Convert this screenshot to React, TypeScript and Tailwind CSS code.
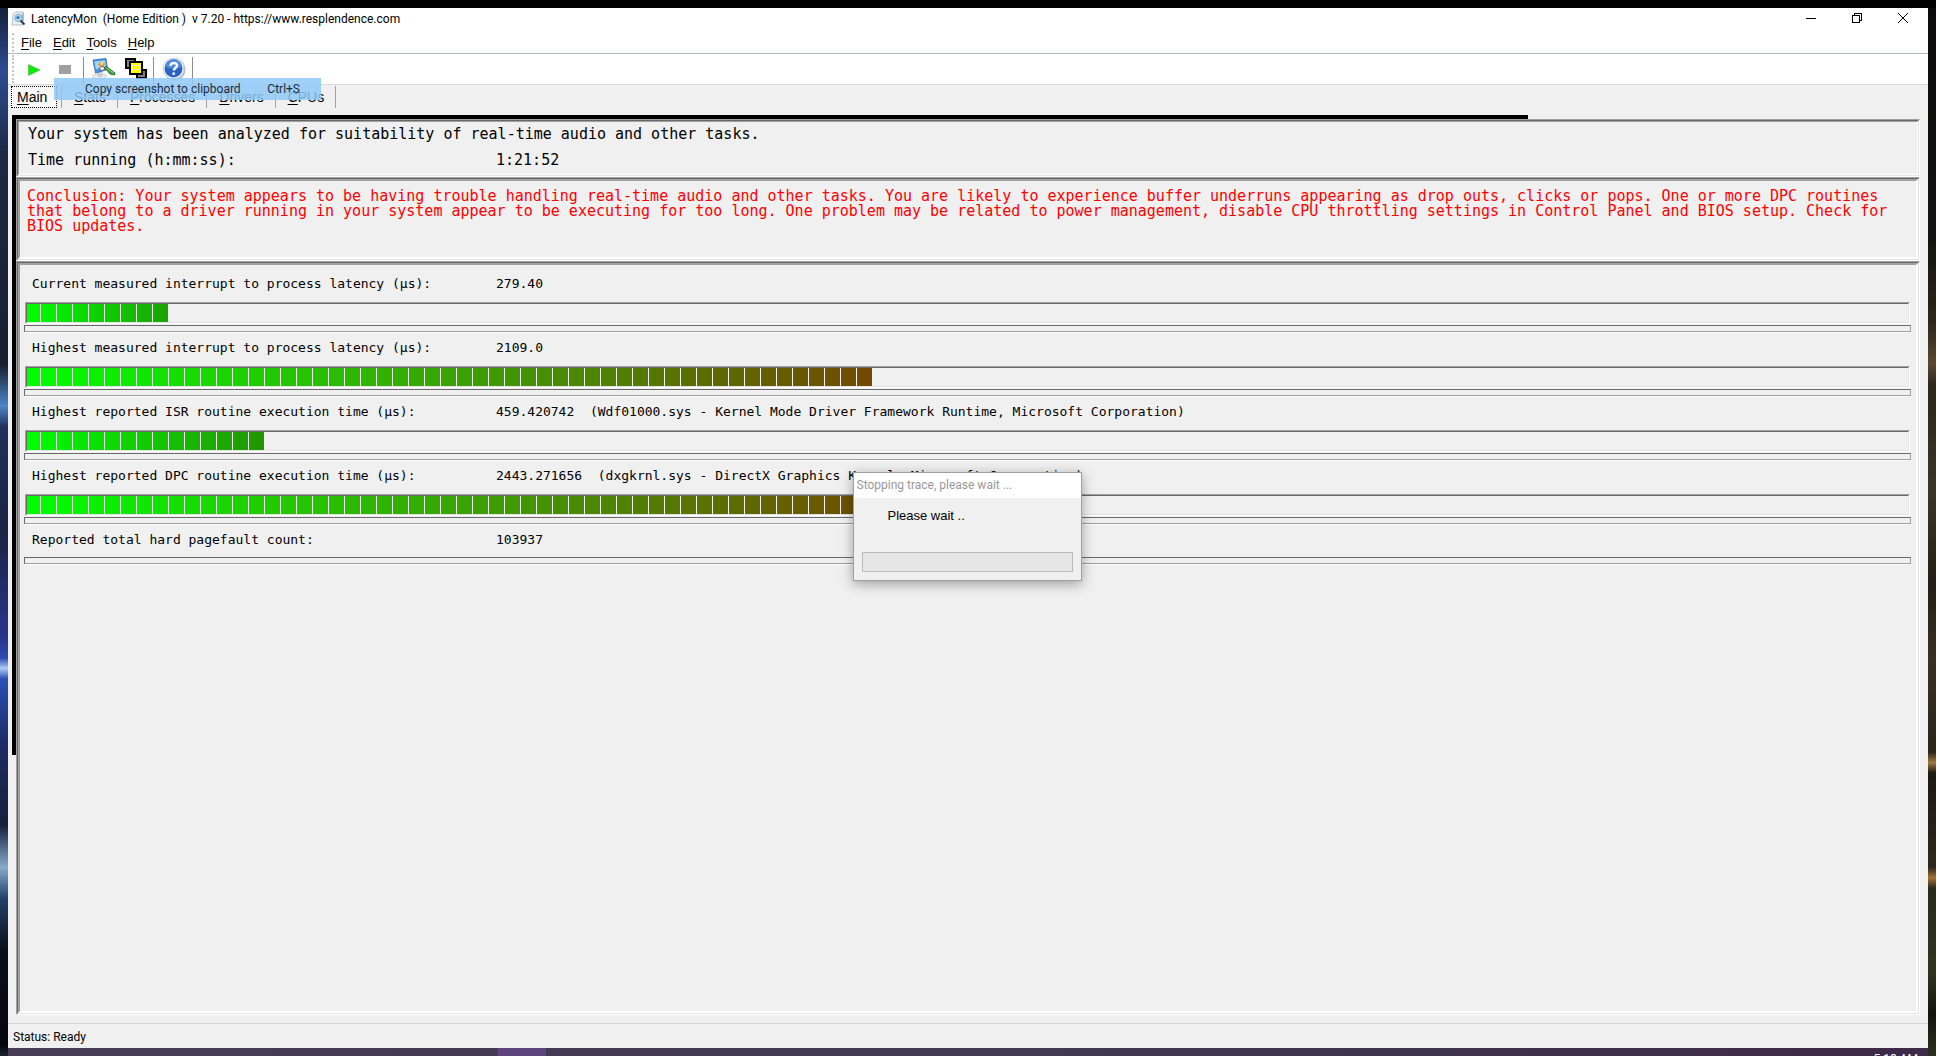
import React from "react";

type Reading = {
  label: string;
  value: string;
  source?: string;
  segments?: number;
  endColor?: string;
};

const readings: Reading[] = [
  { label: "Current measured interrupt to process latency (µs):", value: "279.40", segments: 9, endColor: "#1aa400" },
  { label: "Highest measured interrupt to process latency (µs):", value: "2109.0", segments: 53, endColor: "#724800" },
  {
    label: "Highest reported ISR routine execution time (µs):",
    value: "459.420742",
    source: "(Wdf01000.sys - Kernel Mode Driver Framework Runtime, Microsoft Corporation)",
    segments: 15,
    endColor: "#229600",
  },
  {
    label: "Highest reported DPC routine execution time (µs):",
    value: "2443.271656",
    source: "(dxgkrnl.sys - DirectX Graphics Kernel, Microsoft Corporation)",
    segments: 56,
    endColor: "#764400",
  },
  { label: "Reported total hard pagefault count:", value: "103937" },
];

const menus = ["File", "Edit", "Tools", "Help"];
const tabs = ["Stats", "Processes", "Drivers", "CPUs"];

function Mnemonic({ text }: { text: string }) {
  return (
    <>
      <span className="underline underline-offset-2">{text[0]}</span>
      {text.slice(1)}
    </>
  );
}

function Panel({ thin, className, children }: { thin?: boolean; className?: string; children: React.ReactNode }) {
  return (
    <section className={`flex border border-t-[#a0a0a0] border-l-[#a0a0a0] border-r-white border-b-white ${className ?? ""}`}>
      <div className="flex flex-1 border border-t-[#696969] border-l-[#696969] border-r-[#e3e3e3] border-b-[#e3e3e3]">
        <div
          className={`min-w-0 flex-1 border-t-[#a0a0a0] border-l-[#a0a0a0] border-r-white border-b-white ${thin ? "border" : "border-2"}`}
        >
          {children}
        </div>
      </div>
    </section>
  );
}

function Meter({ segments, endColor }: { segments: number; endColor: string }) {
  return (
    <div className="mr-[6px] ml-[5px] border border-t-[#a0a0a0] border-l-[#a0a0a0] border-r-white border-b-white">
      <div className="flex h-5 border border-t-[#696969] border-l-[#696969] border-r-[#e3e3e3] border-b-[#e3e3e3]">
        <div className="flex h-full" style={{ background: `linear-gradient(to right, #00ff00, ${endColor})` }}>
          {Array.from({ length: segments }, (_, i) => (
            <span
              key={i}
              className={`h-full ${i === 0 ? "w-[13px]" : "w-4 border-l border-[#f0f0f0]"}`}
            />
          ))}
        </div>
      </div>
    </div>
  );
}

function Groove() {
  return (
    <div className="mr-[5px] ml-1 h-2 border-b border-white">
      <div className="h-[7px] border border-t-[#696969] border-l-[#696969] border-r-[#a0a0a0] border-b-[#a0a0a0]" />
    </div>
  );
}

function ReadingRow({ reading }: { reading: Reading }) {
  return (
    <div>
      <div className="flex pl-3 text-[13px] leading-[30px] whitespace-pre">
        <span className="w-[464px] shrink-0">{reading.label}</span>
        <span>{reading.value}{reading.source ? `  ${reading.source}` : ""}</span>
      </div>
      {reading.segments && reading.endColor ? (
        <div className="mt-[3px] mb-px">
          <Meter segments={reading.segments} endColor={reading.endColor} />
        </div>
      ) : (
        <div className="h-[2px]" />
      )}
      <Groove />
    </div>
  );
}

function AppIcon() {
  return (
    <svg width="16" height="16" viewBox="0 0 16 16" aria-hidden="true">
      <path d="M2 3l3-2h7v13H1z" fill="#e9f0f5" stroke="#9fb4c2" strokeWidth=".8" />
      <path d="M12 2v8" stroke="#7f98a8" />
      <circle cx="7.500" cy="7" r="3.800" fill="#a9d3f0" stroke="#7da3bd" strokeWidth=".8" />
      <circle cx="7" cy="6.500" r="1.600" fill="#3d78ac" />
      <path d="M9.500 9.500l4 4" stroke="#24384a" strokeWidth="1.800" />
    </svg>
  );
}

function AnalyzeIcon() {
  return (
    <svg width="24" height="22" viewBox="0 0 24 22" aria-hidden="true">
      <ellipse cx="7.500" cy="18.500" rx="7" ry="2.800" fill="#e6e9ed" stroke="#c0c6cd" strokeWidth=".8" />
      <path d="M5 13h6l-1 6H6z" fill="#c9cfd7" />
      <path d="M1 2l13-1.500 1.500 11L3.500 15z" fill="#4a93dd" stroke="#2f6cb4" strokeWidth=".8" />
      <path d="M2.500 3.500l10.500-1.300.8 6.300-10 2.800z" fill="#a8d6f8" />
      <path d="M5.500 6.500l4-3 4 2.500-3.500 3z" fill="#e8902a" />
      <circle cx="9.800" cy="5.500" r="1.500" fill="#fbe6a0" />
      <path d="M7 10l4-2 2 3-3 2z" fill="#e8eef4" stroke="#7d4d2a" strokeWidth=".8" />
      <path d="M12.500 9.500l2-1 8.500 6.500-.5 2-4.500-1z" fill="#3fa545" stroke="#17661d" strokeWidth=".8" />
      <path d="M14 9.500l7.500 5.500" stroke="#8fd78f" strokeWidth=".8" />
    </svg>
  );
}

function CopyIcon() {
  return (
    <svg width="22" height="22" viewBox="0 0 22 22" shapeRendering="crispEdges" aria-hidden="true">
      <rect x="1" y="1" width="9" height="9" fill="#808080" stroke="#000" strokeWidth="2" />
      <rect x="12" y="12" width="9" height="8" fill="#808080" stroke="#000" strokeWidth="2" />
      <rect x="5" y="4" width="12" height="12" fill="#ffff00" stroke="#000" strokeWidth="2" />
      {[0, 1, 2, 3, 4].map((r) =>
        [0, 1, 2, 3, 4].map((c) => (
          <rect key={`${r}-${c}`} x={6 + c * 2 + (r % 2)} y={5 + r * 2} width="1" height="1" fill="#fff8c8" />
        )),
      )}
    </svg>
  );
}

function HelpIcon() {
  return (
    <svg width="24" height="24" viewBox="0 0 24 24" aria-hidden="true">
      <circle cx="12.500" cy="12.500" r="11" fill="#b9bcc2" />
      <circle cx="11.500" cy="11.500" r="10.500" fill="#f4f6f9" stroke="#cdd2d9" />
      <circle cx="11.500" cy="11.500" r="9" fill="#2a63c4" />
      <path d="M3.500 10a8 8 0 0 1 16 0c-5 2-11 2-16 0z" fill="#4f88dd" />
      <path d="M8.500 9c0-4 6.500-4 6.500-.500 0 2.500-3.200 2.500-3.200 5" fill="none" stroke="#fff" strokeWidth="2.400" />
      <circle cx="11.700" cy="16.700" r="1.400" fill="#fff" />
    </svg>
  );
}

function Grip() {
  return <div className="my-px ml-1 w-0 self-stretch border-l-2 border-dotted border-[#c4c4c4]" />;
}

function ToolSeparator() {
  return <div className="h-[27px] w-px self-end bg-[#8c8c8c]" />;
}

function TitleBar() {
  return (
    <header className="flex h-6 items-start justify-between bg-white">
      <div className="flex items-center gap-1 pt-[3px] pl-[3px]">
        <AppIcon />
        <h1 className="text-[12px] leading-4 whitespace-pre">LatencyMon  (Home Edition )  v 7.20 - https://www.resplendence.com</h1>
      </div>
      <div className="flex pr-[2px]">
        <button aria-label="Minimize" className="flex h-5 w-[46px] items-center justify-center">
          <svg width="10" height="10" viewBox="0 0 10 10" shapeRendering="crispEdges"><path d="M0 5h10v1H0z" /></svg>
        </button>
        <button aria-label="Restore" className="flex h-5 w-[46px] items-center justify-center">
          <svg width="10" height="10" viewBox="0 0 10 10" shapeRendering="crispEdges" fill="none" stroke="#000">
            <path d="M.5 2.500h7v7h-7zM2.500 2.500v-2h7v7h-2" />
          </svg>
        </button>
        <button aria-label="Close" className="flex h-5 w-[46px] items-center justify-center">
          <svg width="10" height="10" viewBox="0 0 10 10" fill="none" stroke="#000"><path d="M0 0l10 10M10 0L0 10" /></svg>
        </button>
      </div>
    </header>
  );
}

function ToolBar() {
  return (
    <div className="flex h-[31px] items-center border-b border-[#dadada] bg-white">
      <Grip />
      <button aria-label="Start" className="ml-[14px] pt-px">
        <svg width="12" height="12" viewBox="0 0 12 12"><path d="M.5 .5v11L12 6z" fill="#00f000" stroke="#4cb04c" strokeWidth=".6" /></svg>
      </button>
      <button aria-label="Stop" className="mr-3 ml-[19px] h-[9px] w-3 bg-[#a0a0a0]" />
      <ToolSeparator />
      <button aria-label="Analyze" className="ml-2"><AnalyzeIcon /></button>
      <button aria-label="Copy" className="mr-[6px] ml-[9px]"><CopyIcon /></button>
      <ToolSeparator />
      <button aria-label="Help contents" className="mr-[6px] ml-2"><HelpIcon /></button>
      <ToolSeparator />
    </div>
  );
}

function Dialog() {
  return (
    <div
      role="dialog"
      aria-labelledby="dialog-title"
      className="flex h-[109px] w-[229px] flex-col border border-[#a0a0a0] bg-[#f0f0f0] shadow-[0_3px_12px_rgba(0,0,0,0.35)]"
    >
      <h2 id="dialog-title" className="h-[25px] bg-white pl-[3px] text-[12px] leading-[25px] text-[#999999]">Stopping trace, please wait ...</h2>
      <p className="mt-2 pl-[34px] font-['Liberation_Sans',sans-serif] text-[13px] leading-5">Please wait ..</p>
      <div role="progressbar" aria-label="Stopping trace" className="mx-2 mt-auto mb-2 h-5 border border-[#bcbcbc] bg-[#e6e6e6]" />
    </div>
  );
}

export default function App() {
  return (
    <div className="flex h-screen flex-col bg-white pr-px pb-px font-[Roboto,sans-serif] text-black">
      <div className="h-2 bg-black" />
      <div className="flex min-h-0 flex-1">
        <div className="w-2 bg-[linear-gradient(to_bottom,#15203a_0%,#2d4c92_6%,#1c2844_14%,#161e30_34%,#4a86c8_38%,#20305c_40%,#1a2244_50%,#28348c_60%,#2a48b0_62%,#b0ccf4_63%,#2a50b8_64%,#1c2c66_70%,#16203c_78%,#86aacd_82%,#22406a_85%,#0a0e1a_90%,#05070e_99%,#1c2535_100%)]" />
        <div className="flex min-w-0 flex-1 flex-col">
          <div className="relative flex min-h-0 flex-1 flex-col bg-[#f0f0f0]">
            <TitleBar />
            <nav className="flex h-[22px] items-center border-b border-[#b4b8c0] bg-white font-['Liberation_Sans',sans-serif] text-[13px]">
              <Grip />
              <div className="flex gap-[11px] pl-[7px]">
                {menus.map((m) => (
                  <button key={m} className="leading-4"><Mnemonic text={m} /></button>
                ))}
              </div>
            </nav>
            <ToolBar />
            <div role="tablist" className="flex h-[30px] items-start pt-px pl-[3px] font-['Liberation_Sans',sans-serif] text-[14px] leading-5">
              <button role="tab" aria-selected="true" className="h-[22px] w-[46px] border border-dotted border-black bg-[#f8f8f8] pl-[5px] text-left">
                <Mnemonic text="Main" />
              </button>
              <div className="ml-1 h-[22px] w-px bg-[#a0a0a0]" />
              {tabs.map((t) => (
                <button key={t} role="tab" aria-selected="false" className="h-[22px] border-r border-[#a0a0a0] pr-[11px] pl-3">
                  <Mnemonic text={t} />
                </button>
              ))}
            </div>
            <div
              role="menuitem"
              className="absolute top-[70px] left-[46px] flex h-[22px] w-[267px] justify-between bg-[#91c9f7]/85 pr-[21px] pl-[31px] text-[12px] leading-[22px] text-[#1c2b3c]"
            >
              <span>Copy screenshot to clipboard</span>
              <span>Ctrl+S</span>
            </div>

            <main className="flex min-h-0 flex-1 flex-col pr-2 pl-1 font-['DejaVu_Sans_Mono',monospace]">
              <div className="h-1 w-[1516px] max-w-full shrink-0 bg-black" />
              <div className="flex min-h-0 flex-1">
                <div className="h-[636px] w-1 shrink-0 bg-black" />
                <div className="flex min-w-0 flex-1 flex-col">
                  <Panel thin className="h-[58px] shrink-0">
                    <div className="flex flex-col gap-[2px] pl-[9px] text-[15px] leading-6 whitespace-pre">
                      <p>Your system has been analyzed for suitability of real-time audio and other tasks.</p>
                      <p className="flex"><span className="w-[468px]">Time running (h:mm:ss):</span><span>1:21:52</span></p>
                    </div>
                  </Panel>
                  <Panel className="h-[84px] shrink-0">
                    <p className="pt-2 pr-4 pl-[7px] text-[15px] leading-[15px] text-[#ff0000]">
                      Conclusion: Your system appears to be having trouble handling real-time audio and other tasks. You are likely to
                      experience buffer underruns appearing as drop outs, clicks or pops. One or more DPC routines that belong to a
                      driver running in your system appear to be executing for too long. One problem may be related to power
                      management, disable CPU throttling settings in Control Panel and BIOS setup. Check for BIOS updates.
                    </p>
                  </Panel>
                  <Panel className="min-h-0 flex-1">
                    <div className="pt-1">
                      {readings.map((r) => <ReadingRow key={r.label} reading={r} />)}
                    </div>
                  </Panel>
                </div>
              </div>
            </main>

            <footer className="mt-2 h-[25px] border-t border-[#d7d7d7] pl-[5px] text-[12px] leading-[26px]">Status: Ready</footer>

            <div className="pointer-events-none absolute inset-0 flex items-center justify-center pr-[2px] pb-[3px]">
              <Dialog />
            </div>
          </div>
          <div className="flex h-2 shrink-0 justify-between overflow-hidden bg-linear-to-r from-[#483b55] via-[#423a54] to-[#3c2a48]">
            <div className="ml-[490px] w-12 bg-[#5e447f]" />
            <time className="pt-[3px] pr-[10px] text-[12px] leading-4 text-white">5:18 AM</time>
          </div>
        </div>
        <div className="w-2 bg-[linear-gradient(to_bottom,#0c0a0c_0%,#15130f_22%,#2c261a_30%,#5a4a30_34%,#2a261c_36%,#3a3428_46%,#241e16_55%,#383024_62%,#2a241a_71%,#a07840_72%,#1c1812_73%,#2e291e_82%,#a07038_83%,#2a281a_84%,#33321f_92%,#14140e_96%,#2c3020_100%)]" />
      </div>
    </div>
  );
}
